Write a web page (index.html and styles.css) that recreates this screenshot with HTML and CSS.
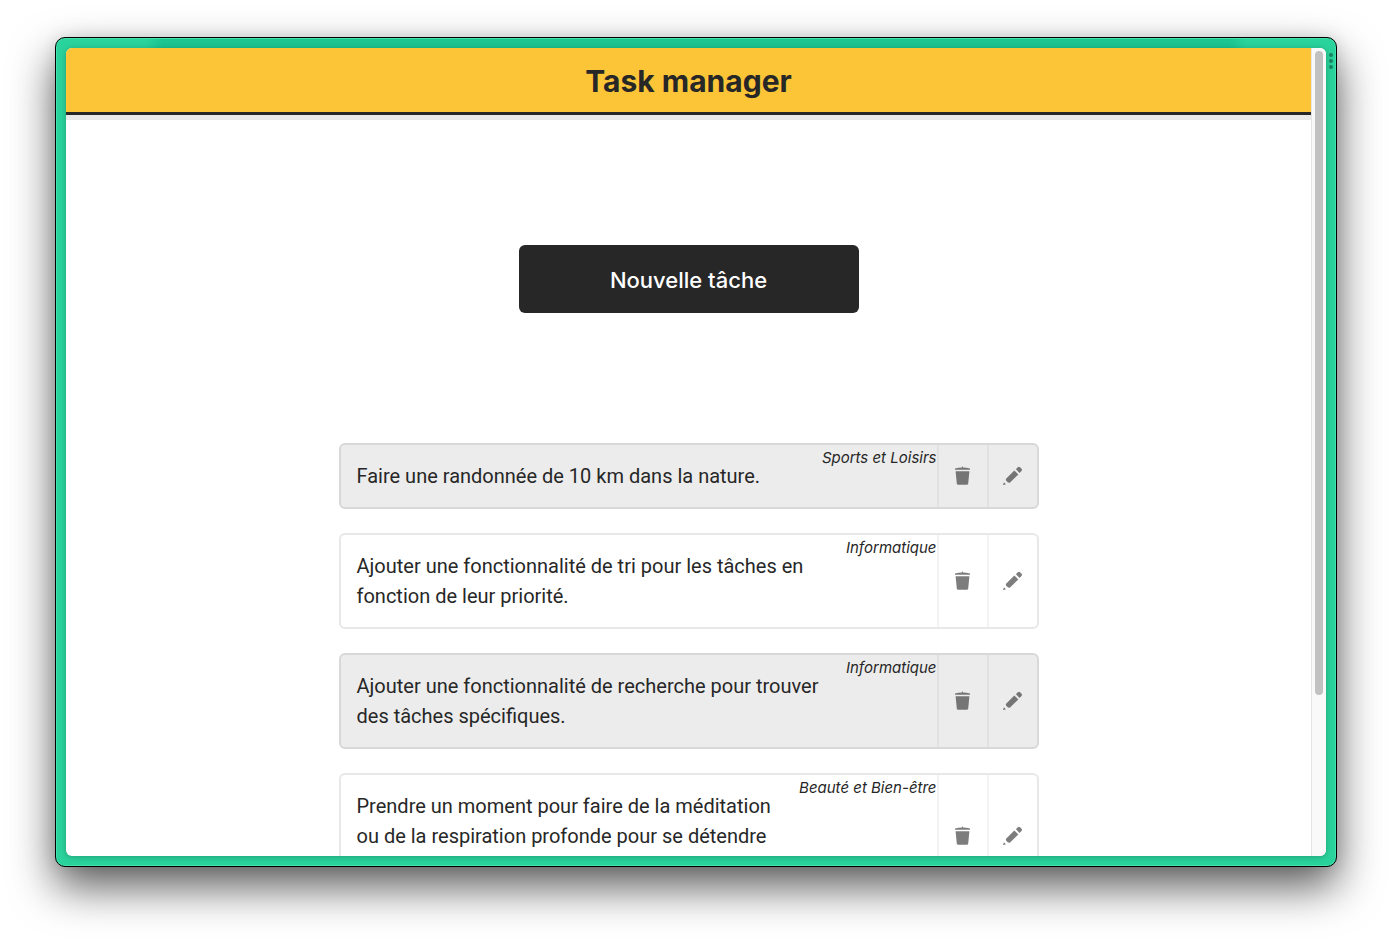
FILE: index.html
```html
<!DOCTYPE html>
<html lang="fr">
<head>
<meta charset="utf-8">
<meta name="viewport" content="width=device-width, initial-scale=1">
<title>Task manager</title>
<link rel="stylesheet" href="styles.css">
</head>
<body>
<svg class="sprite" aria-hidden="true">
  <symbol id="trash" viewBox="0 0 20 20">
    <path d="M2 3.800V2.600Q5.500 1.500 9 1.400V.8Q9.500 .2 10 .8V1.400Q13.500 1.500 17 2.600V3.800Z"/>
    <path d="M2.600 5.200H16.400L15.200 17.600Q15 18.800 13.900 18.800H5.100Q4 18.800 3.800 17.600Z"/>
  </symbol>
  <symbol id="pencil" viewBox="0 0 20 20">
    <path d="M12.900 3.200L14.800 1.300Q16 .3 17 1.200L18.600 2.800Q19.500 3.800 18.500 5L16.500 6.900Z"/>
    <path d="M11.300 4.400L15.300 8.400L7.300 16.200Q6 17.300 4.800 16.300L3.200 14.700Q2.400 13.500 3.300 12.400Z"/>
    <path d="M.9 16.300L2.900 18.300L.8 19Q0 19.100 .2 18.400Z"/>
  </symbol>
</svg>
<div class="window">
  <div class="menu-dots" aria-hidden="true"><i></i><i></i><i></i></div>
  <div class="viewport">
    <div class="page">
      <header class="header"><h1>Task manager</h1></header>
      <main class="main">
        <button class="new-task" type="button">Nouvelle tâche</button>
        <ul class="tasks">
          <li class="task task--done">
            <p class="task-text">Faire une randonnée de 10 km dans la nature.</p>
            <em class="category">Sports et Loisirs</em>
            <button class="action" type="button" aria-label="Supprimer"><svg><use href="#trash"/></svg></button>
            <button class="action" type="button" aria-label="Modifier"><svg><use href="#pencil"/></svg></button>
          </li>
          <li class="task">
            <p class="task-text">Ajouter une fonctionnalité de tri pour les tâches en fonction de leur priorité.</p>
            <em class="category">Informatique</em>
            <button class="action" type="button" aria-label="Supprimer"><svg><use href="#trash"/></svg></button>
            <button class="action" type="button" aria-label="Modifier"><svg><use href="#pencil"/></svg></button>
          </li>
          <li class="task task--done">
            <p class="task-text">Ajouter une fonctionnalité de recherche pour trouver des tâches spécifiques.</p>
            <em class="category">Informatique</em>
            <button class="action" type="button" aria-label="Supprimer"><svg><use href="#trash"/></svg></button>
            <button class="action" type="button" aria-label="Modifier"><svg><use href="#pencil"/></svg></button>
          </li>
          <li class="task task--tall">
            <p class="task-text">Prendre un moment pour faire de la méditation ou de la respiration profonde pour se détendre</p>
            <em class="category">Beauté et Bien-être</em>
            <button class="action" type="button" aria-label="Supprimer"><svg><use href="#trash"/></svg></button>
            <button class="action" type="button" aria-label="Modifier"><svg><use href="#pencil"/></svg></button>
          </li>
        </ul>
      </main>
    </div>
    <div class="scrollbar" aria-hidden="true"><div class="thumb"></div></div>
  </div>
</div>
</body>
</html>
```
FILE: styles.css
```css
* { box-sizing: border-box; }

body {
  margin: 0;
  height: 100vh;
  padding: 37px 55px 73px;
  background: #fff;
  color: #272727;
  font-family: Inter, "Liberation Sans", sans-serif;
  overflow: hidden;
}

.sprite { position: absolute; width: 0; height: 0; }

.window {
  position: relative;
  height: 100%;
  padding: 10px;
  border: 1px solid #000;
  border-radius: 10px;
  background: linear-gradient(90deg, #2ad39c 90px, #1dc590 106px, #1dc590 calc(100% - 106px), #2ad39c calc(100% - 90px)) top / 100% 16px no-repeat, #2ad39c;
  box-shadow: inset 0 0 0 1px #43e3ae, 0 20px 44px rgba(0, 0, 0, .64), 0 0 16px rgba(0, 0, 0, .1);
}

.menu-dots {
  position: absolute;
  top: 15px;
  right: 3px;
  display: grid;
  gap: 2px;
}

.menu-dots i { width: 4px; height: 4px; border-radius: 50%; background: #168460; }

.viewport {
  display: flex;
  height: 100%;
  border-radius: 6px;
  overflow: hidden;
  background: #fff;
  box-shadow: 0 1px 6px rgba(0, 0, 0, .25);
}

.page { flex: 1; min-width: 0; overflow: hidden; }

.header {
  background: #fcc537;
  border-bottom: 3px solid #272727;
  box-shadow: 0 5px 0 #e9e9e9;
}

.header h1 {
  margin: 0;
  padding: 9px 0 7px;
  font-size: 30px;
  line-height: 48px;
  font-weight: 700;
  text-align: center;
}

.main {
  display: flex;
  flex-direction: column;
  align-items: center;
  gap: 130px;
  padding: 130px 16px;
}

.new-task {
  width: 340px;
  height: 68px;
  padding: 2px 0 0;
  border: 0;
  border-radius: 6px;
  background: #272727;
  color: #fff;
  font: 500 22px/32px Inter, "Liberation Sans", sans-serif;
}

.tasks {
  display: grid;
  gap: 24px;
  width: 100%;
  max-width: 700px;
  margin: 0;
  padding: 0;
  list-style: none;
}

.task {
  display: flex;
  border: 2px solid #e8e8e8;
  border-radius: 6px;
  background: #fff;
}

.task--done { background: #ececec; border-color: #d8d8d8; }
.task--tall { min-height: 126px; }

.task-text {
  flex: 1;
  min-width: 0;
  margin: 0;
  padding: 16px;
  font-family: Roboto, "Liberation Sans", sans-serif;
  font-size: 20px;
  line-height: 30px;
}

.category {
  padding-top: 1px;
  font-size: 15px;
  line-height: 24px;
  white-space: nowrap;
}

.action {
  display: grid;
  place-items: center;
  width: 50px;
  padding: 0;
  border: 0;
  border-left: 2px solid #f3f3f3;
  background: none;
  color: #7d7d7d;
}

.task--done .action { border-left-color: #e1e1e1; color: #757575; }
.action svg { width: 20px; height: 20px; fill: currentColor; }

.scrollbar {
  width: 15px;
  padding: 3px;
  border-left: 1px solid #e4e4e4;
  background: #f9f9f9;
}

.thumb { width: 8px; height: 80.3%; border-radius: 4px; background: #c1c1c1; }
```
